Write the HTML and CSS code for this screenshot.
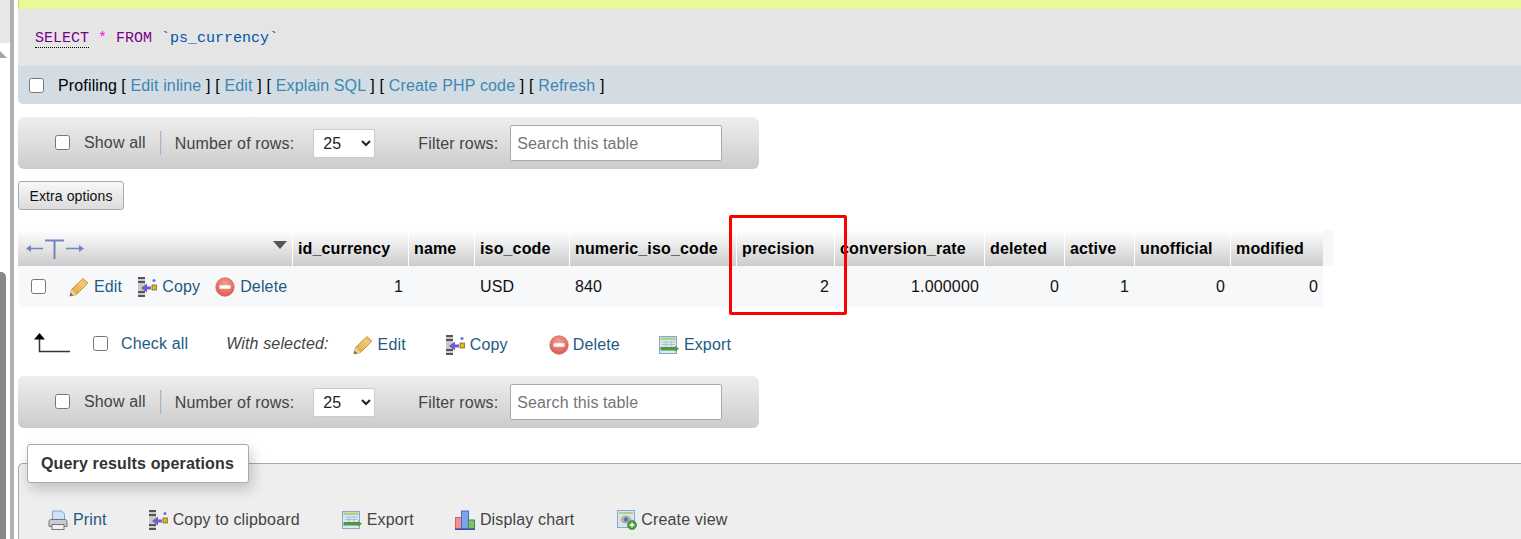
FILE: index.html
```html
<!DOCTYPE html>
<html lang="en">
<head>
<meta charset="utf-8">
<title>phpMyAdmin</title>
<link rel="stylesheet" href="styles.css">
</head>
<body>
<svg class="defs" width="0" height="0" aria-hidden="true">
  <defs>
    <linearGradient id="pg" x1="0" y1="1" x2="1" y2="0"><stop offset="0" stop-color="#dd9f35"/><stop offset="1" stop-color="#f8e08a"/></linearGradient>
    <radialGradient id="dg" cx=".5" cy=".35" r=".7"><stop offset="0" stop-color="#f6a294"/><stop offset="1" stop-color="#d9534a"/></radialGradient>
    <symbol id="i-edit" viewBox="0 0 20 20">
      <path d="M1 19 2.500 12.500 14 1.500 19 6 7.500 17.500Z" fill="url(#pg)" stroke="#c8923c" stroke-width="1"/>
      <path d="M14 1.500 19 6 17.200 7.800 12.200 3.200Z" fill="#eeb27a"/>
      <path d="M1 19 2.500 12.500 7.500 17.500Z" fill="#ecd2ac"/>
      <path d="M1 19 1.800 15.800 4.200 18.200Z" fill="#6b5a3a"/>
    </symbol>
    <symbol id="i-copy" viewBox="0 0 20 20">
      <path d="M1 0h7v2H1zM1 4h7v2H1zM1 14h7v2H1zM1 18h7v2H1z" fill="#555"/>
      <path d="M1 2h7v2H1zM1 6h7v8H1zM1 16h7v2H1z" fill="#c9c9c9"/>
      <path d="M4 11 10 6.500v3h4v3h-4v3z" fill="#6a5fd0"/>
      <rect x="15" y="8" width="4.500" height="5" fill="#e6b422" stroke="#6b5a1e" stroke-width=".7"/>
      <circle cx="17" cy="3.500" r="1.600" fill="#6a74d8"/>
    </symbol>
    <symbol id="i-del" viewBox="0 0 20 20">
      <circle cx="10" cy="10" r="9.200" fill="url(#dg)" stroke="#cf6a60" stroke-width=".8"/>
      <rect x="4.500" y="8.300" width="11" height="3.400" rx=".6" fill="#fff"/>
    </symbol>
    <symbol id="i-export" viewBox="0 0 20 20">
      <rect x=".5" y="1.500" width="17" height="17" fill="#dbe7f3" stroke="#86a7cf"/>
      <rect x="1.500" y="2.500" width="15" height="2.500" fill="#a9d28a"/>
      <path d="M3 7h13M3 9.500h13M7 6v6M12 6v6" stroke="#a7b8c9" stroke-width=".8" fill="none"/>
      <rect x="1.500" y="12" width="15" height="3.500" fill="#4c9a3c"/>
      <path d="M16 10.800 20 13.700 16 16.600Z" fill="#4c9a3c"/>
    </symbol>
    <symbol id="i-print" viewBox="0 0 20 20">
      <path d="M4.500 1h9l3 3v6h-12z" fill="#cfe2f6" stroke="#7ea3cc"/>
      <path d="M2.500 9.500h15a2 2 0 0 1 1.500 2v5H1v-5a2 2 0 0 1 1.500-2Z" fill="#c9ccd0" stroke="#777"/>
      <rect x="4" y="14.500" width="12" height="5" fill="#f2f2f2" stroke="#777"/>
    </symbol>
    <symbol id="i-chart" viewBox="0 0 20 20">
      <rect x=".5" y="7.500" width="6" height="11.500" fill="#f58f8f" stroke="#e85b5b"/>
      <rect x="6.500" y="1" width="7" height="18" fill="#7da6ea" stroke="#3d6fcf"/>
      <rect x="13.500" y="10" width="6" height="9" fill="#7fc07f" stroke="#3f8f3f"/>
      <rect x="0" y="18.500" width="20" height="1.500" fill="#3450a8"/>
    </symbol>
    <symbol id="i-view" viewBox="0 0 20 20">
      <rect x=".5" y=".5" width="17" height="17" fill="#d9e4ef" stroke="#86a7cf"/>
      <rect x="2" y="2" width="14" height="2" fill="#a9d28a"/>
      <ellipse cx="9" cy="9.500" rx="5.500" ry="4" fill="#b7b3a7"/>
      <circle cx="9" cy="9.500" r="2.200" fill="#4f78b8"/>
      <circle cx="15" cy="15" r="4.500" fill="#4c9a3c" stroke="#2f7a2a" stroke-width=".6"/>
      <path d="M15 12.500v5M12.500 15h5" stroke="#fff" stroke-width="1.400"/>
    </symbol>
  </defs>
</svg>

<aside class="rail">
  <div class="rail-panel">
    <div class="rail-light"></div>
    <div class="rail-tri"></div>
    <div class="rail-dark"></div>
  </div>
  <div class="rail-bar"></div>
</aside>

<main class="main">
  <div class="notice"></div>
  <div class="sql"><code><span class="kw">SELECT</span> <span class="star">*</span> <span class="from">FROM</span> <span class="tick">`</span><span class="tb">ps_currency</span><span class="tick">`</span></code></div>
  <div class="profiling">
    <input type="checkbox" class="cb">
    <span class="pf-label">Profiling</span>
    <span class="pf-links"><b>[</b> <a>Edit inline</a> <b>]</b> <b>[</b> <a>Edit</a> <b>]</b> <b>[</b> <a>Explain SQL</a> <b>]</b> <b>[</b> <a>Create PHP code</a> <b>]</b> <b>[</b> <a>Refresh</a> <b>]</b></span>
  </div>

  <div class="navbar nav-top">
    <input type="checkbox" class="cb">
    <span class="show-all">Show all</span>
    <span class="sep"></span>
    <span class="lbl">Number of rows:</span>
    <select class="sel"><option>25</option></select>
    <span class="lbl filter">Filter rows:</span>
    <input class="search" type="text" placeholder="Search this table">
  </div>

  <button class="extra" type="button">Extra options</button>

  <table class="grid">
    <colgroup>
      <col class="c0"><col class="c1"><col class="c2"><col class="c3"><col class="c4"><col class="c5"><col class="c6"><col class="c7"><col class="c8"><col class="c9"><col class="c10"><col class="c11">
    </colgroup>
    <thead>
      <tr>
        <th class="th-tools">
          <div class="tools">
            <svg class="tarrows" width="58" height="22" viewBox="0 0 58 22"><g fill="none" stroke="#7483c4"><path d="M4 10.500h13M40 10.500h14" stroke-width="1.300"/><path d="M19 2.500h19M28.500 2v19" stroke-width="2"/></g><path d="M0 10.500 5 7v7ZM58 10.500 53 7v7Z" fill="#7483c4"/></svg>
            <span class="tri"></span>
          </div>
        </th>
        <th>id_currency</th><th>name</th><th>iso_code</th><th>numeric_iso_code</th><th>precision</th><th>conversion_rate</th><th>deleted</th><th>active</th><th>unofficial</th><th>modified</th>
        <th class="th-end"></th>
      </tr>
    </thead>
    <tbody>
      <tr>
        <td class="td-actions">
          <div class="actions">
            <input type="checkbox" class="cb">
            <a class="act a1"><svg class="ico"><use href="#i-edit"/></svg>Edit</a>
            <a class="act a2"><svg class="ico"><use href="#i-copy"/></svg>Copy</a>
            <a class="act a3"><svg class="ico"><use href="#i-del"/></svg>Delete</a>
          </div>
        </td>
        <td class="num">1</td><td></td><td>USD</td><td>840</td><td class="num">2</td><td class="num">1.000000</td><td class="num">0</td><td class="num">1</td><td class="num">0</td><td class="num">0</td>
        <td class="td-end"></td>
      </tr>
    </tbody>
  </table>

  <div class="bulk">
    <svg class="arrow-up" width="36" height="21" viewBox="0 0 36 21"><path d="M5.500 6v13.500H36" fill="none" stroke="#333" stroke-width="1.500"/><path d="M0 7.500 5.500 1 11 7.500Z" fill="#000"/></svg>
    <input type="checkbox" class="cb">
    <a class="chk-all">Check all</a>
    <em class="with">With selected:</em>
    <a class="act b1"><svg class="ico"><use href="#i-edit"/></svg>Edit</a>
    <a class="act b2"><svg class="ico"><use href="#i-copy"/></svg>Copy</a>
    <a class="act b3"><svg class="ico"><use href="#i-del"/></svg>Delete</a>
    <a class="act b4"><svg class="ico"><use href="#i-export"/></svg>Export</a>
  </div>

  <div class="navbar nav-bottom">
    <input type="checkbox" class="cb">
    <span class="show-all">Show all</span>
    <span class="sep"></span>
    <span class="lbl">Number of rows:</span>
    <select class="sel"><option>25</option></select>
    <span class="lbl filter">Filter rows:</span>
    <input class="search" type="text" placeholder="Search this table">
  </div>

  <fieldset class="ops">
    <legend class="ops-legend">Query results operations</legend>
    <div class="ops-row">
      <a class="op o1"><svg class="ico"><use href="#i-print"/></svg>Print</a>
      <a class="op o2"><svg class="ico"><use href="#i-copy"/></svg>Copy to clipboard</a>
      <a class="op o3"><svg class="ico"><use href="#i-export"/></svg>Export</a>
      <a class="op o4"><svg class="ico"><use href="#i-chart"/></svg>Display chart</a>
      <a class="op o5"><svg class="ico"><use href="#i-view"/></svg>Create view</a>
    </div>
  </fieldset>

  <div class="highlight" aria-hidden="true"></div>
</main>
</body>
</html>
```
FILE: styles.css
```css
* { box-sizing: border-box; }
html, body { height: 539px; overflow: hidden; }
body {
  margin: 0;
  display: flex;
  background: #fff;
  color: #000;
  font: 16px/20px "Liberation Sans", Arial, sans-serif;
  letter-spacing: .15px;
}
.defs { position: absolute; }

/* left navigation stub */
.rail { width: 18px; flex: none; display: flex; }
.rail-panel { width: 10px; display: flex; flex-direction: column; }
.rail-light { height: 43px; background: #e7e7e7; }
.rail-tri { width: 0; height: 0; margin-top: 8px; border-left: 7px solid #a5a5a5; border-top: 7px solid transparent; }
.rail-dark { margin-top: 214px; width: 6px; flex: 1; background: #878787; border-top-right-radius: 5px; }
.rail-bar { width: 4px; background: #b0b0b0; }

.main { flex: 1; min-width: 0; position: relative; }

.notice { height: 9px; background: #e8f998; border-left: 1px solid #c5d86a; }
.sql {
  height: 57px;
  padding: 21px 0 0 17px;
  background: #e5e5e5;
  font: 15px/17px "Liberation Mono", "DejaVu Sans Mono", monospace;
  letter-spacing: 0;
}
.sql code { font: inherit; }
.kw { color: #770088; border-bottom: 1px dotted #000; }
.star { color: #ff00ff; }
.from { color: #770088; }
.tick, .tb { color: #0055aa; }

.profiling {
  height: 38px;
  display: flex;
  align-items: center;
  padding: 2px 0 0 11px;
  background: #d3dce3;
  border-radius: 0 0 0 5px;
}
.profiling .cb { margin: -2px 14px 0 0; }
.pf-label { margin-right: 4px; }
.pf-links b { font-weight: 400; color: #000; }
.pf-links a { color: #3a87b5; }
.cb { width: 15px; height: 15px; margin: 0; flex: none; }

.navbar {
  width: 741px;
  height: 52px;
  display: flex;
  align-items: center;
  background: linear-gradient(#eeeeee, #cccccc);
  border-radius: 6px;
  padding-left: 37px;
  color: #444;
}
.nav-top { margin-top: 13px; }
.navbar > .cb { margin-top: -1px; }
.show-all { margin-left: 14px; margin-top: -1px; }
.sep { width: 2px; height: 24px; margin: 0 13px 0 14px; background: linear-gradient(90deg, #9aa5b0, #dfe4ea); }
.lbl { display: block; padding-top: 2px; }
.sel {
  width: 62px;
  height: 29px;
  margin-left: 19px;
  padding-left: 5px;
  font: 16px "Liberation Sans", Arial, sans-serif;
  color: #222;
  background: #fff;
  border: 1px solid #ccc;
  border-radius: 2px;
}
.filter { margin-left: 43px; }
.search {
  width: 212px;
  height: 36px;
  margin-left: 12px;
  padding: 1px 6px 0;
  font: 16px "Liberation Sans", Arial, sans-serif;
  letter-spacing: .1px;
  background: #fff;
  border: 1px solid #aaa;
  border-radius: 2px;
}
.search::placeholder { color: #757575; opacity: 1; }

.extra {
  display: block;
  width: 106px;
  height: 29px;
  margin-top: 12px;
  padding: 0;
  font: 14px "Liberation Sans", Arial, sans-serif;
  letter-spacing: .1px;
  color: #111;
  background: linear-gradient(#f8f8f8, #dcdcdc);
  border: 1px solid #aaa;
  border-radius: 3px;
}

.grid {
  margin-top: 20px;
  table-layout: fixed;
  width: 1316px;
  border-collapse: collapse;
  border-spacing: 0;
}
.c0 { width: 274px; }
.c1 { width: 116px; }
.c2 { width: 66px; }
.c3 { width: 95px; }
.c4 { width: 167px; }
.c5 { width: 98px; }
.c6 { width: 150px; }
.c7 { width: 80px; }
.c8 { width: 70px; }
.c9 { width: 96px; }
.c10 { width: 93px; }
.c11 { width: 11px; }
.grid th {
  height: 36px;
  padding: 2px 0 0 5.500px;
  text-align: left;
  font-weight: 700;
  background: linear-gradient(#ffffff, #cccccc);
  border-left: 1px solid #fff;
  white-space: nowrap;
}
.grid th.th-tools { padding: 0; border-left: 0; }
.grid th.th-end { background: #f6f7f9; border-left: 0; padding: 0; }
.grid td {
  height: 41px;
  padding: 1px 5px 0 6px;
  background: #f7f8fa;
  color: #111;
}
.grid td.num { text-align: right; }
.grid td.td-actions { padding: 0 0 0 13px; }
.grid td.td-end { background: #fff; padding: 0; }
.tools { display: flex; align-items: center; justify-content: space-between; padding: 2px 5px 0 8px; height: 36px; }
.tri { width: 0; height: 0; margin-top: -8px; border: 7px solid transparent; border-top: 8px solid #555; border-bottom: 0; }

.actions { display: flex; align-items: center; }
.act { display: inline-flex; align-items: center; color: #235a81; white-space: nowrap; }
.ico { width: 20px; height: 20px; flex: none; margin-right: 5px; }
.actions .act { margin-top: 1px; }
.a1 { margin-left: 23px; }
.a2 { margin-left: 15px; }
.a3 { margin-left: 15px; }

.bulk { height: 69px; padding-top: 5px; display: flex; align-items: center; }
.arrow-up { margin: -3px 0 0 16px; flex: none; }
.bulk .cb { margin: -2px 0 0 23px; }
.chk-all { margin-left: 13px; margin-top: -1px; color: #235a81; }
.with { margin-left: 38px; margin-top: -1px; color: #444; font-style: italic; }
.bulk .act { margin-top: 1px; }
.b1 { margin-left: 24px; }
.b2 { margin-left: 39px; }
.b3 { margin-left: 41px; }
.b3 .ico { margin-right: 4px; }
.b4 { margin-left: 39px; }

.ops {
  margin: 16px 0 0;
  min-width: 0;
  padding: 0;
  height: 95px;
  background: #eee;
  border: 1px solid #aaa;
  border-width: 1px 0 0 1px;
  border-radius: 5px 0 0 0;
}
.ops-legend {
  margin-left: 8px;
  padding: 0 13px;
  width: 222px;
  height: 39px;
  line-height: 37px;
  font-weight: 700;
  color: #333;
  background: #fff;
  border: 1px solid #aaa;
  border-radius: 3px;
  box-shadow: 3px 6px 14px rgba(0, 0, 0, .2);
  white-space: nowrap;
}
.ops-row { display: flex; align-items: center; padding: 27px 0 0 29px; }
.op { display: inline-flex; align-items: center; color: #444; white-space: nowrap; }
.o1 { color: #235a81; }
.o2 { margin-left: 41px; }
.o3 { margin-left: 42px; }
.o4 { margin-left: 41px; }
.o5 { margin-left: 43px; }
.o5 .ico { margin-right: 4px; }

.highlight {
  position: absolute;
  left: 711px;
  top: 215px;
  width: 118px;
  height: 100px;
  border: 3px solid #f00;
  border-radius: 2px;
}
```
